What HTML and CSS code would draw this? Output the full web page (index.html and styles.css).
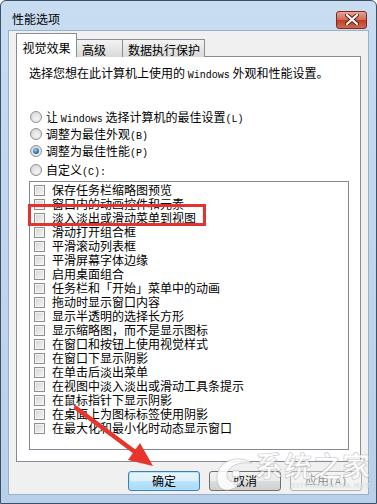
FILE: index.html
```html
<!DOCTYPE html>
<html lang="zh-CN">
<head>
  <meta charset="UTF-8" />
  <title>性能选项</title>
  <link rel="stylesheet" href="styles.css">
</head>
<body>
  <div class="window">
    <div class="titlebar">
      <span class="title">性能选项</span>
      <span class="close">
        <svg width="14" height="11" viewBox="0 0 14 11">
          <path d="M2 1 L12 10 M12 1 L2 10" stroke="#5a1d12" stroke-width="4" stroke-linecap="round"/>
          <path d="M2 1 L12 10 M12 1 L2 10" stroke="#fff" stroke-width="2.2" stroke-linecap="round"/>
        </svg>
      </span>
    </div>

    <div class="client">
      <div class="tabs">
        <div class="tab active">视觉效果</div>
        <div class="tab t2">高级</div>
        <div class="tab t3">数据执行保护</div>
      </div>

      <div class="panel">
        <p class="desc">选择您想在此计算机上使用的 <span class="en">Windows</span> 外观和性能设置。</p>

        <div class="radios">
          <div class="radio"><span class="dot"></span><span>让 <span class="en">Windows</span> 选择计算机的最佳设置<span class="en">(L)</span></span></div>
          <div class="radio"><span class="dot"></span><span>调整为最佳外观<span class="en">(B)</span></span></div>
          <div class="radio"><span class="dot on"></span><span>调整为最佳性能<span class="en">(P)</span></span></div>
          <div class="radio last"><span class="dot"></span><span>自定义<span class="en">(C):</span></span></div>
        </div>

        <div class="list">
          <div class="item"><span class="cb"></span>保存任务栏缩略图预览</div>
          <div class="item"><span class="cb"></span>窗口内的动画控件和元素</div>
          <div class="item"><span class="cb"></span>淡入淡出或滑动菜单到视图</div>
          <div class="item"><span class="cb"></span>滑动打开组合框</div>
          <div class="item"><span class="cb"></span>平滑滚动列表框</div>
          <div class="item"><span class="cb"></span>平滑屏幕字体边缘</div>
          <div class="item"><span class="cb"></span>启用桌面组合</div>
          <div class="item"><span class="cb"></span>任务栏和「开始」菜单中的动画</div>
          <div class="item"><span class="cb"></span>拖动时显示窗口内容</div>
          <div class="item"><span class="cb"></span>显示半透明的选择长方形</div>
          <div class="item"><span class="cb"></span>显示缩略图，而不是显示图标</div>
          <div class="item"><span class="cb"></span>在窗口和按钮上使用视觉样式</div>
          <div class="item"><span class="cb"></span>在窗口下显示阴影</div>
          <div class="item"><span class="cb"></span>在单击后淡出菜单</div>
          <div class="item"><span class="cb"></span>在视图中淡入淡出或滑动工具条提示</div>
          <div class="item"><span class="cb"></span>在鼠标指针下显示阴影</div>
          <div class="item"><span class="cb"></span>在桌面上为图标标签使用阴影</div>
          <div class="item"><span class="cb"></span>在最大化和最小化时动态显示窗口</div>
        </div>
      </div>

      <div class="buttons">
        <button class="btn default">确定</button>
        <button class="btn">取消</button>
        <button class="btn disabled">应用<span class="en">(A)</span></button>
      </div>
    </div>

    <!-- annotations on top of the screenshot -->
    <div class="highlight"></div>
    <svg class="arrow" width="377" height="504" viewBox="0 0 377 504">
      <path d="M76 408 L135 452" stroke="#e8352b" stroke-width="4.5" stroke-linecap="round"/>
      <polygon points="153,466 128,460 140,443" fill="#e8352b"/>
    </svg>
    <div class="watermark">
      <svg class="wm-logo" width="42" height="40" viewBox="0 0 42 40">
        <path d="M6 30 C2 18 10 6 24 5 C33 4 40 9 40 9 C30 8 20 10 16 17 C13 22 16 28 22 28 C27 28 30 24 30 24 C28 32 20 37 13 36 C9 35 7 33 6 30 Z" fill="rgba(255,255,255,0.85)" stroke="rgba(150,150,150,0.5)" stroke-width="0.8"/>
        <circle cx="24" cy="20" r="4" fill="rgba(255,255,255,0.85)" stroke="rgba(150,150,150,0.5)" stroke-width="0.8"/>
      </svg>
      <div class="wm-text">
        <span class="wm-name">系统之家</span>
        <span class="wm-url">XITONGZHIJIA.NET</span>
      </div>
    </div>
  </div>
</body>
</html>
```

FILE: styles.css
```css
* { box-sizing: border-box; }
body {
  margin: 0;
  background: #fff;
  font-family: "Noto Sans CJK SC", "Liberation Sans", sans-serif;
  font-size: 12px;
  color: #000;
}
.en {
  font-family: "Liberation Mono", monospace;
  font-size: 10px;
}
.window {
  position: relative;
  width: 377px;
  height: 504px;
  background: linear-gradient(#c8dcf2, #b8d0ea);
  border: 1px solid #3e5064;
  border-radius: 6px 6px 0 0;
  overflow: hidden;
}
.titlebar {
  height: 29px;
  padding: 7px 9px 0 11px;
  display: flex;
  align-items: center;
  justify-content: space-between;
}
.title {
  line-height: 16px;
}
.close {
  width: 31px;
  height: 18px;
  margin-top: 1px;
  border: 1px solid #7b2a1c;
  border-radius: 3px;
  background: linear-gradient(#e9a395, #d06a56 48%, #bd3f27 52%, #cf6a4f);
  display: flex;
  align-items: center;
  justify-content: center;
}
.client {
  margin: 0 7px;
  height: 465px;
  background: #f0f0f0;
  border: 1px solid #9ab1cb;
  padding: 2px 7px 0 7px;
}
.tabs {
  display: flex;
  align-items: flex-end;
  height: 24px;
  position: relative;
  z-index: 1;
}
.tab {
  height: 18px;
  padding: 2px 0 0 5px;
  line-height: 16px;
  border: 1px solid #898c95;
  border-bottom: none;
  background: linear-gradient(#f3f3f3, #e6e6e6 50%, #d9d9d9);
  white-space: nowrap;
}
.tab.active {
  width: 61px;
  height: 24px;
  padding: 6px 0 0 0;
  text-align: center;
  background: #fff;
}
.tab.t2 {
  width: 47px;
  margin-left: -1px;
}
.tab.t3 {
  width: 83px;
  margin-left: -1px;
}
.panel {
  margin-top: -1px;
  height: 406px;
  background: #fff;
  border: 1px solid #898c95;
  padding: 8px 0 0 12px;
}
.desc {
  margin: 0;
  line-height: 16px;
}
.radios {
  margin-top: 24px;
}
.radio {
  height: 17px;
  display: flex;
  align-items: center;
  white-space: nowrap;
}
.radio.last {
  margin-top: 2px;
}
.dot {
  width: 12px;
  height: 12px;
  margin: 0 4px 0 1px;
  border-radius: 50%;
  border: 1px solid #8e8f8f;
  background: radial-gradient(circle at 60% 65%, #f4f4f4, #d2d2d2);
  display: flex;
  align-items: center;
  justify-content: center;
}
.dot.on::after {
  content: "";
  width: 6px;
  height: 6px;
  border-radius: 50%;
  background: radial-gradient(circle at 40% 35%, #9bd0f0, #1d5e9e 70%);
}
.list {
  margin-top: 3px;
  width: 320px;
  height: 269px;
  border: 1px solid #828790;
  padding-top: 1px;
}
.item {
  height: 14px;
  display: flex;
  align-items: center;
  white-space: nowrap;
  line-height: 14px;
}
.cb {
  width: 11px;
  height: 11px;
  margin: 0 7px 0 4px;
  border: 1px solid #8f8f8f;
  background: linear-gradient(135deg, #d4d4d4, #f6f6f6);
  box-shadow: inset 0 0 0 1px #f4f4f4;
}
.buttons {
  display: flex;
  justify-content: flex-end;
  gap: 9px;
  margin: 9px -1px 0 0;
}
.btn {
  width: 72px;
  height: 20px;
  padding: 0;
  font: inherit;
  line-height: 16px;
  color: #000;
  border: 1px solid #707070;
  border-radius: 3px;
  background: linear-gradient(#f2f2f2, #ebebeb 50%, #dddddd 50%, #cfcfcf);
}
.btn.default {
  border-color: #3c7fb1;
  background: linear-gradient(#eaf6fd, #d9f0fc 50%, #bee6fd 50%, #a7d9f5);
  box-shadow: inset 0 0 0 1px #b5e1fb;
}
.btn.disabled {
  color: #8c8c8c;
  border-color: #adb2b5;
  background: #f4f4f4;
}
.highlight {
  position: absolute;
  left: 27px;
  top: 203px;
  width: 178px;
  height: 22px;
  border: 3px solid #e4322f;
}
.arrow {
  position: absolute;
  left: -1px;
  top: -1px;
  pointer-events: none;
}
.watermark {
  position: absolute;
  left: 211px;
  top: 447px;
  display: flex;
  align-items: flex-start;
  gap: 1px;
}
.wm-logo {
  margin-top: 6px;
}
.wm-text {
  display: flex;
  flex-direction: column;
  align-items: flex-end;
}
.wm-name {
  font-size: 28px;
  line-height: 34px;
  font-weight: bold;
  letter-spacing: 1px;
  color: rgba(255, 255, 255, 0.82);
  -webkit-text-stroke: 0.6px rgba(140, 140, 140, 0.55);
}
.wm-url {
  font-family: "Liberation Sans", sans-serif;
  font-size: 7px;
  line-height: 8px;
  letter-spacing: 1px;
  color: rgba(255, 255, 255, 0.85);
  text-shadow: 0 0 1px rgba(120, 120, 120, 0.6);
}
```
